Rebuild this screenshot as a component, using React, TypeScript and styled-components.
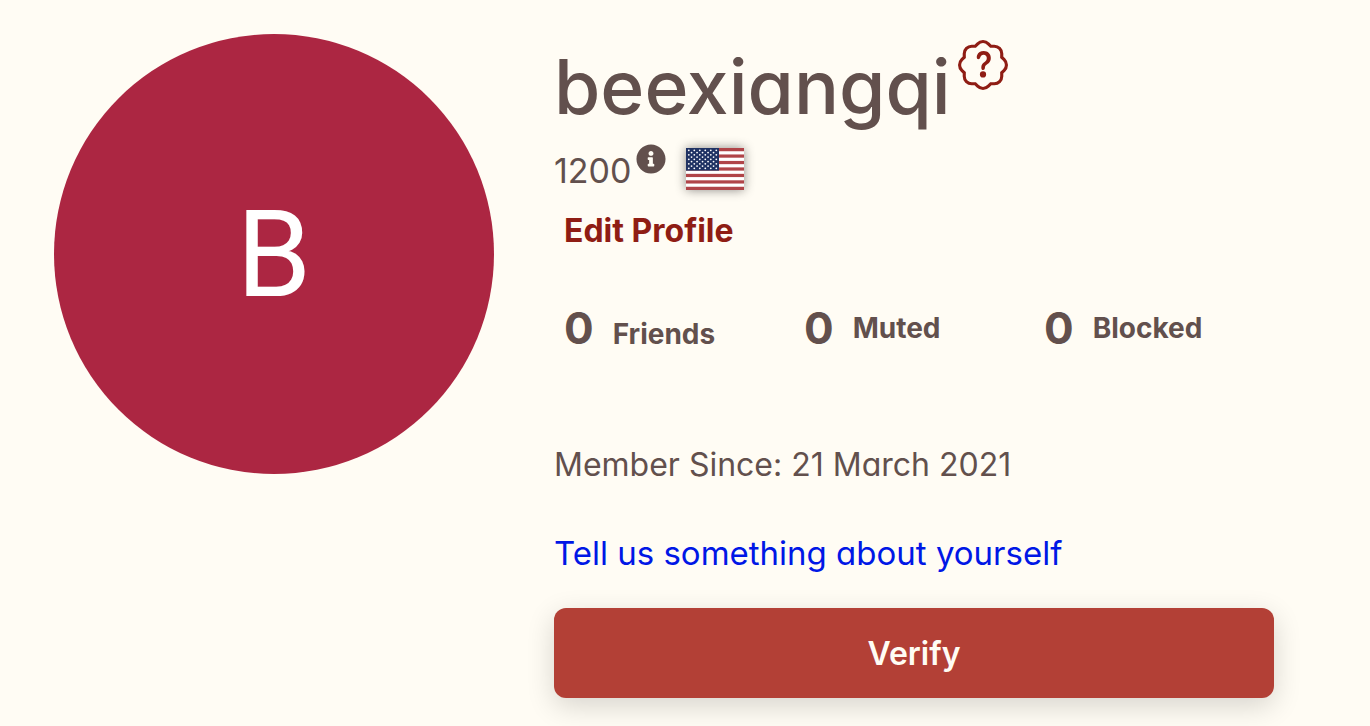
import React from "react";
import styled, { createGlobalStyle } from "styled-components";
import { BsPatchQuestion } from "react-icons/bs";
import { FaInfoCircle } from "react-icons/fa";

const colors = {
  page: "#fffcf4",
  text: "#62504d",
  accent: "#8f1d14",
  button: "#b34036",
  avatar: "#ac2642",
  link: "#0017e6",
};

const GlobalStyle = createGlobalStyle`
  *, *::before, *::after { box-sizing: border-box; }
  body {
    margin: 0;
    background: ${colors.page};
    color: ${colors.text};
    font-family: Inter, "Open Sans", sans-serif;
    font-feature-settings: "cv11";
  }
`;

const Profile = styled.main`
  display: flex;
  align-items: flex-start;
  gap: 60px;
  padding: 34px 96px 28px 54px;
`;

const Avatar = styled.div`
  display: flex;
  flex: none;
  align-items: center;
  justify-content: center;
  width: 440px;
  height: 440px;
  padding-top: 2px;
  border-radius: 50%;
  background: ${colors.avatar};
  color: #fff;
  font-family: Roboto, sans-serif;
  font-size: 120px;
  line-height: 1;
`;

const Details = styled.section`
  flex: 1;
  min-width: 0;
`;

const NameRow = styled.div`
  display: flex;
  align-items: flex-start;
  gap: 7px;
`;

const Username = styled.h1`
  margin: 0;
  font-size: 75px;
  font-weight: 500;
  line-height: 106px;
`;

const IconButton = styled.button<{ $color: string; $top: number }>`
  display: flex;
  padding: 0;
  margin-top: ${(p) => p.$top}px;
  border: 0;
  background: none;
  color: ${(p) => p.$color};
  cursor: pointer;
`;

const RatingRow = styled.div`
  display: flex;
  align-items: flex-start;
  gap: 5px;
  padding-top: 4px;
  font-size: 34px;
  line-height: 54px;
`;

const FlagFrame = styled.svg`
  flex: none;
  width: 58px;
  height: 42px;
  margin: 4px 0 0 15px;
  box-shadow: 0 0 10px rgba(0, 0, 0, 0.45);
`;

const EditLink = styled.a`
  display: block;
  width: fit-content;
  margin-top: 9px;
  padding-left: 10px;
  color: ${colors.accent};
  font-size: 32px;
  font-weight: 700;
  line-height: 48px;
  text-decoration: none;
`;

const Stats = styled.ul`
  display: grid;
  grid-template-columns: repeat(3, 1fr);
  margin: 37px 0 77px;
  padding: 0;
  list-style: none;
`;

const Stat = styled.li<{ $align: "baseline" | "center" }>`
  display: flex;
  align-items: ${(p) => p.$align};
  gap: 19px;
  padding-left: 10px;
  font-weight: 700;
`;

const StatCount = styled.span`
  font-size: 44px;
  line-height: 72px;
`;

const StatLabel = styled.span`
  font-size: 28px;
  line-height: 42px;
`;

const Line = styled.p`
  margin: 0 0 40px;
  font-size: 32px;
  line-height: 48px;
`;

const BioLink = styled.a`
  display: block;
  width: fit-content;
  color: ${colors.link};
  font-size: 33px;
  line-height: 48px;
  text-decoration: none;
`;

const VerifyButton = styled.button`
  display: block;
  width: 100%;
  height: 90px;
  margin-top: 31px;
  border: 0;
  border-radius: 12px;
  background: ${colors.button};
  box-shadow: 0 8px 28px rgba(0, 0, 0, 0.16);
  color: ${colors.page};
  font: inherit;
  font-feature-settings: inherit;
  font-size: 32px;
  font-weight: 600;
  cursor: pointer;
`;

const starRows = Array.from({ length: 9 }, (_, row) => row);

function Flag() {
  return (
    <FlagFrame viewBox="0 0 58 42" preserveAspectRatio="none" role="img" aria-label="United States">
      <rect width="58" height="42" fill="#fff" />
      {[0, 1, 2, 3, 4, 5, 6].map((i) => (
        <rect key={i} y={(i * 84) / 13} width="58" height={42 / 13} fill="#b04448" />
      ))}
      <rect width="33" height={(42 * 7) / 13} fill="#1f3263" />
      {starRows.map((row) =>
        Array.from({ length: row % 2 ? 5 : 6 }, (_, col) => (
          <circle
            key={`${row}-${col}`}
            cx={2.8 + col * 5.5 + (row % 2 ? 2.75 : 0)}
            cy={2.3 + row * 2.25}
            r="0.9"
            fill="#fff"
          />
        ))
      )}
    </FlagFrame>
  );
}

const stats = [
  { label: "Friends", count: 0, align: "baseline" as const },
  { label: "Muted", count: 0, align: "center" as const },
  { label: "Blocked", count: 0, align: "center" as const },
];

export default function App() {
  return (
    <>
      <GlobalStyle />
      <Profile>
        <Avatar aria-hidden="true">B</Avatar>
        <Details>
          <NameRow>
            <Username>beexiangqi</Username>
            <IconButton $color={colors.accent} $top={6} aria-label="Verification status">
              <BsPatchQuestion size={50} />
            </IconButton>
          </NameRow>
          <RatingRow>
            <span>1200</span>
            <IconButton $color={colors.text} $top={0} aria-label="About this rating">
              <FaInfoCircle size={30} />
            </IconButton>
            <Flag />
          </RatingRow>
          <EditLink href="#edit">Edit Profile</EditLink>
          <Stats>
            {stats.map((s) => (
              <Stat key={s.label} $align={s.align}>
                <StatCount>{s.count}</StatCount>
                <StatLabel>{s.label}</StatLabel>
              </Stat>
            ))}
          </Stats>
          <Line>Member Since: 21 March 2021</Line>
          <BioLink href="#bio">Tell us something about yourself</BioLink>
          <VerifyButton type="button">Verify</VerifyButton>
        </Details>
      </Profile>
    </>
  );
}
